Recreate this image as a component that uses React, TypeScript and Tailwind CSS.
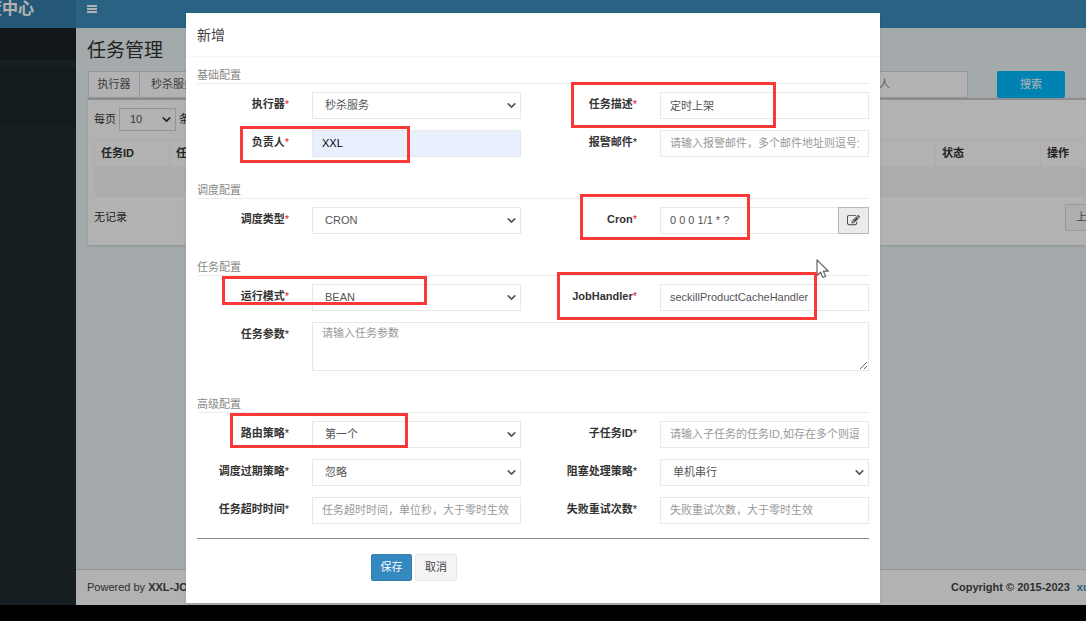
import type { ReactNode } from 'react';
import { ChevronDown } from 'lucide-react';
import clsx from 'clsx';

const fieldBase =
  'block h-[27px] w-full min-w-0 border border-[#e8e8e8] text-[11px] text-[#555] outline-none placeholder:text-[#999] placeholder:opacity-100';

type LabelProps = { htmlFor: string; required?: boolean; children: ReactNode };

function FieldLabel({ htmlFor, required, children }: LabelProps) {
  return (
    <label htmlFor={htmlFor} className="text-right text-[11px] leading-6 font-bold whitespace-nowrap text-[#333]">
      {children}
      <span className={clsx('font-normal', required ? 'text-[#e02020]' : 'text-[#222]')}>*</span>
    </label>
  );
}

type TextFieldProps = { id: string; value?: string; placeholder?: string; className?: string };

function TextField({ id, value, placeholder, className = 'bg-white' }: TextFieldProps) {
  return (
    <input
      id={id}
      type="text"
      defaultValue={value}
      placeholder={placeholder}
      className={clsx(fieldBase, 'px-[9px] pb-[2px]', className)}
    />
  );
}

function SelectField({ id, options }: { id: string; options: string[] }) {
  return (
    <div className="relative min-w-0">
      <select id={id} className={clsx(fieldBase, 'appearance-none bg-white pr-6 pl-3')}>
        {options.map((o) => (
          <option key={o}>{o}</option>
        ))}
      </select>
      <ChevronDown
        size={13}
        strokeWidth={3}
        className="pointer-events-none absolute top-[7px] right-[3px] text-[#555]"
      />
    </div>
  );
}

function Section({ title, children }: { title: string; children: ReactNode }) {
  return (
    <section className="mb-[25px]">
      <h3 className="h-[17px] border-b border-[#ececec] text-[11px] leading-4 text-[#888]">{title}</h3>
      <div className="mt-2 grid grid-cols-[92px_1fr_93px_1fr] items-start gap-x-[23px] gap-y-[11px]">{children}</div>
    </section>
  );
}

function EditIcon() {
  return (
    <svg viewBox="0 0 1792 1792" className="size-[13px]" fill="currentColor">
      <path d="M888 1184l116-116-152-152-116 116v56h96v96h56zm440-720q-16-16-33 1l-350 350q-17 17-1 33t33-1l350-350q17-17 1-33zm80 594v190q0 119-84.5 203.5t-203.5 84.5h-832q-119 0-203.5-84.5t-84.5-203.5v-832q0-119 84.5-203.5t203.5-84.5h832q63 0 117 25 15 7 18 23 3 17-9 29l-49 49q-14 14-32 8-23-6-45-6h-832q-66 0-113 47t-47 113v832q0 66 47 113t113 47h832q66 0 113-47t47-113v-126q0-13 9-22l64-64q15-15 35-7t20 29zm-96-738l288 288-672 672h-288v-288zm444 132l-92 92-288-288 92-92q28-28 68-28t68 28l152 152q28 28 28 68t-28 68z" />
    </svg>
  );
}

// highlight frames, placed relative to the dialog
const marks = [
  'left-[385px] top-[69px] w-[205px] h-[46px]',
  'left-[54px] top-[113px] w-[170px] h-[37px]',
  'left-[394px] top-[181px] w-[170px] h-[46px]',
  'left-[36px] top-[263px] w-[205px] h-[29px]',
  'left-[371px] top-[259px] w-[260px] h-[48px]',
  'left-[44px] top-[400px] w-[178px] h-[35px]',
];

function JobDialog() {
  return (
    <div
      role="dialog"
      aria-labelledby="dialog-title"
      className="relative w-full max-w-[694px] self-start bg-white shadow-sm"
    >
      <div className="h-11 border-b border-[#f7f7f7] px-[11px] pt-3">
        <h2 id="dialog-title" className="text-sm leading-5 text-[#444]">新增</h2>
      </div>
      <form className="px-[11px] pt-[10px] pb-[22px]" onSubmit={(e) => e.preventDefault()}>
        <Section title="基础配置">
          <FieldLabel htmlFor="jobGroup" required>执行器</FieldLabel>
          <SelectField id="jobGroup" options={['秒杀服务']} />
          <FieldLabel htmlFor="jobDesc" required>任务描述</FieldLabel>
          <TextField id="jobDesc" value="定时上架" />
          <FieldLabel htmlFor="author" required>负责人</FieldLabel>
          <TextField id="author" value="XXL" className="bg-[#e8f0fe] text-black" />
          <FieldLabel htmlFor="alarmEmail">报警邮件</FieldLabel>
          <TextField id="alarmEmail" placeholder="请输入报警邮件，多个邮件地址则逗号分隔" />
        </Section>

        <Section title="调度配置">
          <FieldLabel htmlFor="scheduleType" required>调度类型</FieldLabel>
          <SelectField id="scheduleType" options={['CRON', '固定速度', '无']} />
          <FieldLabel htmlFor="cron" required>Cron</FieldLabel>
          <div className="flex min-w-0">
            <TextField id="cron" value="0 0 0 1/1 * ?" className="flex-1 border-r-0 bg-white" />
            <button
              type="button"
              aria-label="编辑 Cron"
              className="flex w-[31px] items-center justify-center border border-[#b8b8b8] bg-[#ebebeb] text-[#444]"
            >
              <EditIcon />
            </button>
          </div>
        </Section>

        <Section title="任务配置">
          <FieldLabel htmlFor="glueType" required>运行模式</FieldLabel>
          <SelectField id="glueType" options={['BEAN']} />
          <FieldLabel htmlFor="jobHandler" required>JobHandler</FieldLabel>
          <TextField id="jobHandler" value="seckillProductCacheHandler" />
          <FieldLabel htmlFor="jobParam">任务参数</FieldLabel>
          <textarea
            id="jobParam"
            placeholder="请输入任务参数"
            className="col-span-3 block h-[49px] w-full resize-y border border-[#e8e8e8] px-[9px] py-[2px] text-[11px] leading-4 text-[#555] outline-none placeholder:text-[#999] placeholder:opacity-100"
          />
        </Section>

        <Section title="高级配置">
          <FieldLabel htmlFor="routeStrategy">路由策略</FieldLabel>
          <SelectField id="routeStrategy" options={['第一个', '最后一个', '轮询', '随机']} />
          <FieldLabel htmlFor="childJobId">子任务ID</FieldLabel>
          <TextField id="childJobId" placeholder="请输入子任务的任务ID,如存在多个则逗号分隔" />
          <FieldLabel htmlFor="misfire">调度过期策略</FieldLabel>
          <SelectField id="misfire" options={['忽略', '立即执行一次']} />
          <FieldLabel htmlFor="blockStrategy">阻塞处理策略</FieldLabel>
          <SelectField id="blockStrategy" options={['单机串行', '丢弃后续调度', '覆盖之前调度']} />
          <FieldLabel htmlFor="timeout">任务超时时间</FieldLabel>
          <TextField id="timeout" placeholder="任务超时时间，单位秒，大于零时生效" />
          <FieldLabel htmlFor="failRetry">失败重试次数</FieldLabel>
          <TextField id="failRetry" placeholder="失败重试次数，大于零时生效" />
        </Section>

        <div className="-mt-[11px] border-t border-[#8a8a8a] pt-[15px] pl-[174px]">
          <div className="flex gap-[3px] text-[11px]">
            <button
              type="submit"
              className="h-[27px] w-[41px] rounded-xs border border-[#367fa9] bg-[#3489c1] text-white"
            >
              保存
            </button>
            <button
              type="button"
              className="h-[27px] w-[42px] rounded-xs border border-[#e8e8e8] bg-[#f4f4f4] text-[#444]"
            >
              取消
            </button>
          </div>
        </div>
      </form>

      <svg
        viewBox="0 0 14 20"
        className="pointer-events-none absolute top-[246px] left-[630px] h-5 w-3.5"
        fill="#fff"
        stroke="#666"
        strokeWidth="1.2"
        strokeLinejoin="round"
      >
        <path d="M1 1v15.5l3.6-3.3 2.3 5.3 2.8-1.2-2.3-5.1h5z" />
      </svg>
      {marks.map((m) => (
        <div key={m} className={clsx('pointer-events-none absolute border-3 border-[#fb3838]', m)} />
      ))}
    </div>
  );
}

const headCell = 'border border-[#f7f7f7] px-[6px] text-left font-bold';

function JobListPage() {
  return (
    <div className="flex h-full">
      <aside className="flex w-[76px] shrink-0 flex-col bg-[#222d32]">
        <div className="flex h-7 justify-end overflow-hidden bg-[#367fa9] pr-[42px] text-base leading-[18px] font-bold whitespace-nowrap text-white">
          任务调度中心
        </div>
        <div className="h-8 bg-[#1a2226]" />
        <div className="mt-2 h-[58px] bg-[#1e282c]" />
      </aside>

      <div className="flex min-w-0 flex-1 flex-col overflow-hidden">
        <header className="flex h-7 shrink-0 items-start bg-[#3c8dbc] pt-[5px] pl-[11px]">
          <button type="button" aria-label="切换菜单" className="text-white">
            <svg viewBox="0 0 10 8" className="h-2 w-[10px]" fill="currentColor">
              <path d="M0 0h10v2H0zM0 3h10v2H0zM0 6h10v2H0z" />
            </svg>
          </button>
        </header>

        <main className="flex-1 pl-3">
          <h1 className="-ml-px h-[43px] pt-[11px] text-[19px] leading-6 text-[#333]">任务管理</h1>

          <div className="flex">
            <div className="flex h-[27px] w-[880px] shrink-0 text-[11px] text-[#555]">
              <label
                htmlFor="filterGroup"
                className="flex w-[52px] items-center justify-center border border-[#d2d6de] bg-white"
              >
                执行器
              </label>
              <select
                id="filterGroup"
                className="w-[150px] appearance-none border border-l-0 border-[#d2d6de] bg-white pl-[11px]"
              >
                <option>秒杀服务</option>
              </select>
              <input
                aria-label="任务描述"
                placeholder="请输入任务描述"
                className="ml-6 min-w-0 flex-1 border border-[#d2d6de] bg-white px-[9px]"
              />
              <input
                aria-label="负责人"
                placeholder="请输入负责人"
                className="ml-6 w-[155px] border border-[#d2d6de] bg-white px-[10px] placeholder:text-[#888]"
              />
            </div>
            <button
              type="button"
              className="ml-[29px] h-[27px] w-[68px] shrink-0 rounded-xs bg-[#00bcff] text-[11px] text-white"
            >
              搜索
            </button>
          </div>

          <div className="border-t-2 border-[#c8cbd0] bg-white px-[6px] pb-[14px] text-[11px] text-[#333] shadow-sm">
            <div className="flex items-center gap-[3px] pt-2">
              <label htmlFor="pageSize" className="whitespace-nowrap">每页</label>
              <div className="relative">
                <select
                  id="pageSize"
                  className="block h-[23px] w-[57px] appearance-none border border-[#d2d6de] bg-white pl-[10px] text-[#555]"
                >
                  <option>10</option>
                  <option>25</option>
                </select>
                <ChevronDown size={13} strokeWidth={3} className="pointer-events-none absolute top-[5px] right-[3px]" />
              </div>
              <span>条记录</span>
            </div>

            <table className="mt-2 w-full min-w-[1067px] table-fixed border-collapse">
              <thead>
                <tr className="h-7">
                  <th className={clsx(headCell, 'w-[75px]')}>任务ID</th>
                  <th className={headCell}>任务描述</th>
                  <th className={headCell}>调度类型</th>
                  <th className={headCell}>运行模式</th>
                  <th className={headCell}>负责人</th>
                  <th className={clsx(headCell, 'w-[105px]')}>状态</th>
                  <th className={clsx(headCell, 'w-[120px]')}>操作</th>
                </tr>
              </thead>
              <tbody>
                <tr className="h-[29px] bg-[#f7f7f7]">
                  <td colSpan={7} />
                </tr>
              </tbody>
            </table>

            <div className="mt-[7px] flex w-[1067px] items-center">
              <span className="w-[971px] shrink-0">无记录</span>
              <button
                type="button"
                className="h-[27px] shrink-0 rounded-xs border border-[#ddd] bg-[#fafafa] px-[10px] text-[#666]"
              >
                上页
              </button>
            </div>
          </div>
        </main>

        <footer className="flex h-9 shrink-0 items-center border-t border-[#d2d6de] bg-white pl-[11px] text-[11px] whitespace-nowrap text-[#444]">
          <div className="w-[864px] shrink-0">
            Powered by <b>XXL-JOB</b> 2.3.0
          </div>
          <b>Copyright © 2015-2023</b>
          <a href="#author" className="ml-[7px] font-bold text-[#3c8dbc]">xuxueli</a>
        </footer>
      </div>
    </div>
  );
}

export default function App() {
  return (
    <div className="flex h-screen flex-col bg-black font-['Liberation_Sans','Noto_Sans_CJK_SC',sans-serif]">
      <div className="relative min-h-0 flex-1 overflow-hidden bg-[#ebf2f5]">
        <JobListPage />
        <div className="absolute inset-0 flex justify-center bg-black/30 pt-[13px] pr-5">
          <JobDialog />
        </div>
      </div>
      <div className="h-4 shrink-0" />
    </div>
  );
}
